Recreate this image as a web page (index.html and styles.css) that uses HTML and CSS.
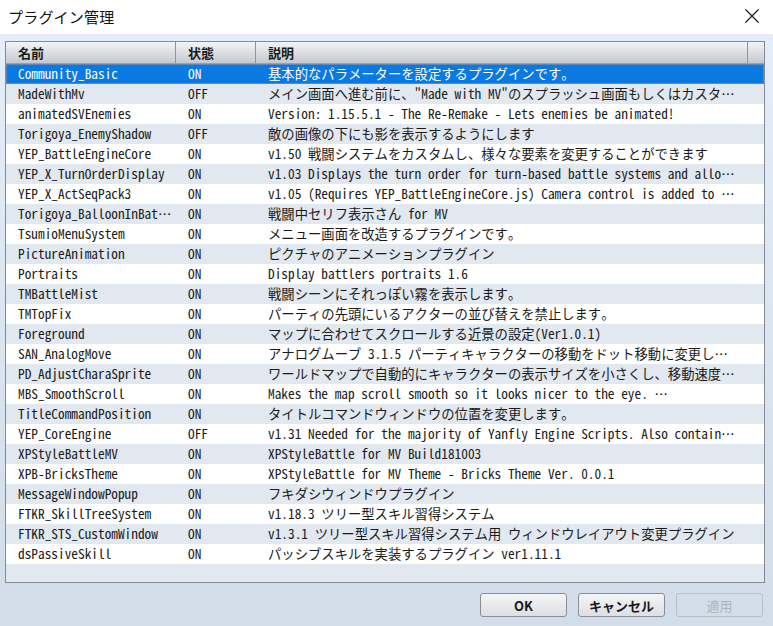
FILE: index.html
```html
<!DOCTYPE html>
<html lang="ja">
<head>
<meta charset="utf-8">
<title>プラグイン管理</title>
<link rel="stylesheet" href="styles.css">
</head>
<body>
<div class="window">
  <div class="titlebar">
    <span class="title">プラグイン管理</span>
    <span class="close"><svg width="16" height="16" viewBox="0 0 16 16"><path d="M1.5 1.5 L14.5 14.5 M14.5 1.5 L1.5 14.5" stroke="#1a1a1a" stroke-width="1.2" fill="none"/></svg></span>
  </div>
  <div class="content">
    <div class="table">
      <div class="thead">
        <div class="th c-name">名前</div>
        <div class="th c-status">状態</div>
        <div class="th c-desc">説明</div>
        <div class="th c-end"></div>
      </div>
      <div class="tbody">
        <div class="row selected"><div class="td c-name">Community_Basic</div><div class="td c-status">ON</div><div class="td c-desc">基本的なパラメーターを設定するプラグインです。</div></div>
        <div class="row"><div class="td c-name">MadeWithMv</div><div class="td c-status">OFF</div><div class="td c-desc">メイン画面へ進む前に、"Made with MV"のスプラッシュ画面もしくはカスタム画面を表示します。</div></div>
        <div class="row"><div class="td c-name">animatedSVEnemies</div><div class="td c-status">ON</div><div class="td c-desc">Version: 1.15.5.1 - The Re-Remake - Lets enemies be animated!</div></div>
        <div class="row"><div class="td c-name">Torigoya_EnemyShadow</div><div class="td c-status">OFF</div><div class="td c-desc">敵の画像の下にも影を表示するようにします</div></div>
        <div class="row"><div class="td c-name">YEP_BattleEngineCore</div><div class="td c-status">ON</div><div class="td c-desc">v1.50 戦闘システムをカスタムし、様々な要素を変更することができます</div></div>
        <div class="row"><div class="td c-name">YEP_X_TurnOrderDisplay</div><div class="td c-status">ON</div><div class="td c-desc">v1.03 Displays the turn order for turn-based battle systems and allows you to see it.</div></div>
        <div class="row"><div class="td c-name">YEP_X_ActSeqPack3</div><div class="td c-status">ON</div><div class="td c-desc">v1.05 (Requires YEP_BattleEngineCore.js) Camera control is added to the action sequences.</div></div>
        <div class="row"><div class="td c-name">Torigoya_BalloonInBattle</div><div class="td c-status">ON</div><div class="td c-desc">戦闘中セリフ表示さん for MV</div></div>
        <div class="row"><div class="td c-name">TsumioMenuSystem</div><div class="td c-status">ON</div><div class="td c-desc">メニュー画面を改造するプラグインです。</div></div>
        <div class="row"><div class="td c-name">PictureAnimation</div><div class="td c-status">ON</div><div class="td c-desc">ピクチャのアニメーションプラグイン</div></div>
        <div class="row"><div class="td c-name">Portraits</div><div class="td c-status">ON</div><div class="td c-desc">Display battlers portraits 1.6</div></div>
        <div class="row"><div class="td c-name">TMBattleMist</div><div class="td c-status">ON</div><div class="td c-desc">戦闘シーンにそれっぽい霧を表示します。</div></div>
        <div class="row"><div class="td c-name">TMTopFix</div><div class="td c-status">ON</div><div class="td c-desc">パーティの先頭にいるアクターの並び替えを禁止します。</div></div>
        <div class="row"><div class="td c-name">Foreground</div><div class="td c-status">ON</div><div class="td c-desc">マップに合わせてスクロールする近景の設定(Ver1.0.1)</div></div>
        <div class="row"><div class="td c-name">SAN_AnalogMove</div><div class="td c-status">ON</div><div class="td c-desc">アナログムーブ 3.1.5 パーティキャラクターの移動をドット移動に変更します。</div></div>
        <div class="row"><div class="td c-name">PD_AdjustCharaSprite</div><div class="td c-status">ON</div><div class="td c-desc">ワールドマップで自動的にキャラクターの表示サイズを小さくし、移動速度を調整します。</div></div>
        <div class="row"><div class="td c-name">MBS_SmoothScroll</div><div class="td c-status">ON</div><div class="td c-desc">Makes the map scroll smooth so it looks nicer to the eye. …</div></div>
        <div class="row"><div class="td c-name">TitleCommandPosition</div><div class="td c-status">ON</div><div class="td c-desc">タイトルコマンドウィンドウの位置を変更します。</div></div>
        <div class="row"><div class="td c-name">YEP_CoreEngine</div><div class="td c-status">OFF</div><div class="td c-desc">v1.31 Needed for the majority of Yanfly Engine Scripts. Also contains bug fixes.</div></div>
        <div class="row"><div class="td c-name">XPStyleBattleMV</div><div class="td c-status">ON</div><div class="td c-desc">XPStyleBattle for MV Build181003</div></div>
        <div class="row"><div class="td c-name">XPB-BricksTheme</div><div class="td c-status">ON</div><div class="td c-desc">XPStyleBattle for MV Theme - Bricks Theme Ver. 0.0.1</div></div>
        <div class="row"><div class="td c-name">MessageWindowPopup</div><div class="td c-status">ON</div><div class="td c-desc">フキダシウィンドウプラグイン</div></div>
        <div class="row"><div class="td c-name">FTKR_SkillTreeSystem</div><div class="td c-status">ON</div><div class="td c-desc">v1.18.3 ツリー型スキル習得システム</div></div>
        <div class="row"><div class="td c-name">FTKR_STS_CustomWindow</div><div class="td c-status">ON</div><div class="td c-desc">v1.3.1 ツリー型スキル習得システム用 ウィンドウレイアウト変更プラグイン</div></div>
        <div class="row"><div class="td c-name">dsPassiveSkill</div><div class="td c-status">ON</div><div class="td c-desc">パッシブスキルを実装するプラグイン ver1.11.1</div></div>
      </div>
    </div>
    <div class="buttons">
      <button class="btn">OK</button>
      <button class="btn">キャンセル</button>
      <button class="btn disabled">適用</button>
    </div>
  </div>
</div>
</body>
</html>
```

FILE: styles.css
```css
* { box-sizing: border-box; }
html, body { margin: 0; padding: 0; }
body {
  width: 773px;
  height: 626px;
  overflow: hidden;
  font-family: "Noto Sans CJK JP", sans-serif;
  color: #1a1a1a;
}
.window {
  width: 773px;
  height: 626px;
  display: flex;
  flex-direction: column;
}
.titlebar {
  height: 34px;
  background: #ffffff;
  display: flex;
  align-items: center;
  justify-content: space-between;
  padding: 0 13px 2px 8px;
}
.title {
  font-size: 15px;
  color: #111;
  letter-spacing: 0.2px;
}
.close { display: flex; width: 16px; height: 16px; }
.content {
  flex: 1;
  background: linear-gradient(#e4edf9, #d2dde9);
  padding: 7px 8px 0 5px;
  display: flex;
  flex-direction: column;
}
.table {
  height: 542px;
  border: 1px solid #848a93;
  background: #e1e8f0;
  display: flex;
  flex-direction: column;
  overflow: hidden;
}
.thead {
  height: 22px;
  display: flex;
  background: linear-gradient(#f3f4f5, #c5c9cf);
  border-bottom: 1px solid #9aa1aa;
  flex-shrink: 0;
}
.th {
  font-size: 13px;
  font-weight: 700;
  line-height: 21px;
  color: #1a1a1a;
  border-right: 1px solid #8e949c;
  padding-left: 12px;
}
.c-name { width: 170px; flex-shrink: 0; }
.c-status { width: 80px; flex-shrink: 0; }
.c-desc { width: 492px; flex-shrink: 0; }
.th.c-end { flex: 1; border-right: none; }
.tbody { display: flex; flex-direction: column; }
.row {
  height: 20px;
  display: flex;
  background: #e1e8f0;
}
.row:nth-child(odd) { background: #ffffff; }
.row.selected {
  background: #0a79e2;
  color: #ffffff;
  box-shadow: inset 0 0 0 1px #5f87b3;
}
.td {
  font-family: "Noto Sans Mono CJK JP", "DejaVu Sans Mono", monospace;
  font-size: 13.33px;
  line-height: 20px;
  white-space: nowrap;
  overflow: hidden;
  text-overflow: ellipsis;
  padding-left: 12px;
  padding-right: 2px;
}
.td.c-desc { padding-right: 8px; }
.buttons {
  display: flex;
  justify-content: flex-end;
  gap: 11px;
  padding-top: 10px;
  padding-right: 2px;
}
.btn {
  width: 87px;
  height: 24px;
  border: 1px solid #8a8e93;
  border-radius: 3px;
  background: linear-gradient(#f4f5f6, #dcdfe3);
  font-family: "Noto Sans CJK JP", sans-serif;
  font-size: 13px;
  font-weight: 700;
  color: #1a1a1a;
  padding: 0;
}
.btn.disabled {
  background: transparent;
  border-color: #b6bec8;
  color: #aab3bd;
  font-weight: 400;
}
```
